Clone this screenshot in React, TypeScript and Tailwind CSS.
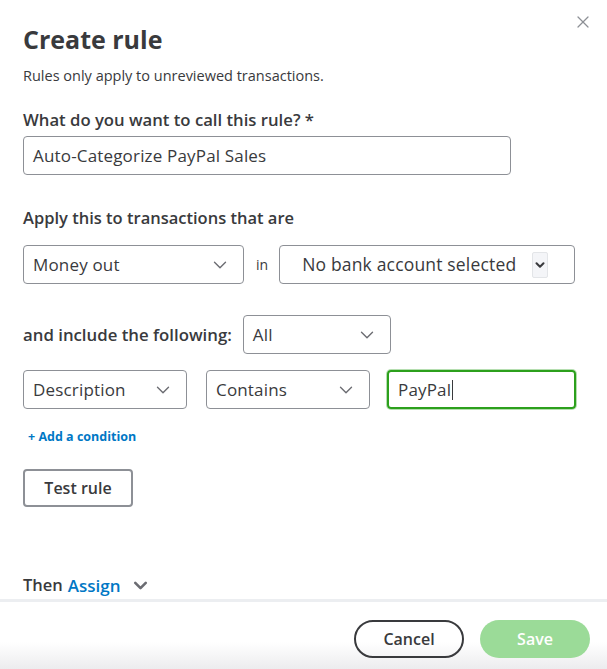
import { ChevronDown, X } from "lucide-react";

function Select({ label, width }: { label: string; width: string }) {
  return (
    <div
      className={`flex h-[39px] items-center justify-between rounded-[4px] border border-[#8d9096] bg-white pl-[9px] pr-[12px] ${width}`}
    >
      <span className="text-[17px] tracking-[0.01em] text-[#393a3d]">{label}</span>
      <ChevronDown size={22} strokeWidth={1.5} className="text-[#6b6c72]" />
    </div>
  );
}

export default function App() {
  return (
    <div className="relative flex h-[669px] w-[607px] flex-col bg-white font-['Open_Sans',sans-serif] text-[#393a3d]">
      <button className="absolute right-[14px] top-[12px] text-[#8d9096]">
        <X size={20} strokeWidth={1.5} />
      </button>

      <div className="flex-1 px-[23px] pt-[21px]">
        <h1 className="text-[25px] font-bold leading-[36px]">Create rule</h1>
        <p className="mt-[10px] text-[14.5px] leading-[18px]">Rules only apply to unreviewed transactions.</p>

        <label className="mt-[24px] block text-[16.7px] font-semibold leading-[22px]">
          What do you want to call this rule? *
        </label>
        <div className="mt-[5px] flex h-[39px] w-[488px] items-center rounded-[4px] border border-[#8d9096] px-[9px] text-[17px] tracking-[0.01em]">
          Auto-Categorize PayPal Sales
        </div>

        <div className="mt-[32px] text-[16.5px] font-semibold leading-[22px]">Apply this to transactions that are</div>
        <div className="mt-[16px] flex items-center">
          <Select label="Money out" width="w-[221px]" />
          <span className="ml-[12px] mr-[11px] text-[14px]">in</span>
          <div className="flex h-[39px] w-[296px] items-center justify-between rounded-[4px] border border-[#8d9096] pl-[22px] pr-[26px]">
            <span className="text-[17.5px] tracking-[0.01em]">No bank account selected</span>
            <span className="flex h-[26px] w-[16px] items-center justify-center rounded-[2px] border border-[#e3e5e8] bg-[#f4f5f8]">
              <ChevronDown size={14} strokeWidth={3.5} className="text-[#393a3d]" />
            </span>
          </div>
        </div>

        <div className="mt-[31px] flex items-center">
          <span className="text-[16.8px] font-semibold">and include the following:</span>
          <div className="ml-[11px]">
            <Select label="All" width="w-[148px]" />
          </div>
        </div>

        <div className="mt-[16px] flex items-center">
          <Select label="Description" width="w-[164px]" />
          <div className="ml-[19px]">
            <Select label="Contains" width="w-[164px]" />
          </div>
          <div className="ml-[17px] flex h-[39px] w-[189px] items-center rounded-[4px] border-2 border-[#2ca01c] px-[9px] text-[17px] tracking-[0.01em] shadow-[0_0_0_1px_rgba(44,160,28,0.35)]">
            PayPal<span className="ml-[1px] inline-block h-[20px] w-[1px] bg-[#393a3d]" />
          </div>
        </div>

        <button className="mt-[19px] ml-[5px] text-[12.5px] font-bold text-[#0077c5]">+ Add a condition</button>

        <div className="mt-[22px]">
          <button className="h-[38px] w-[110px] rounded-[4px] border-2 border-[#8d9096] text-[16px] font-semibold">
            Test rule
          </button>
        </div>

        <div className="mt-[66px] flex items-center gap-[5px] text-[16.5px]">
          <span className="font-semibold">Then</span>
          <span className="font-semibold text-[#0077c5] text-[17px]">Assign</span>
          <ChevronDown size={21} strokeWidth={3} className="ml-[4px] text-[#6b6c72]" />
        </div>
      </div>

      <div className="h-[4px] bg-[#eceef1]" />
      <div className="flex h-[68px] items-start justify-end gap-[16px] bg-gradient-to-b from-white from-60% to-[#ececee] pr-[17px] pt-[18px]">
        <button className="h-[38px] w-[110px] rounded-full border-2 border-[#393a3d] text-[16px] font-semibold">
          Cancel
        </button>
        <button className="h-[38px] w-[110px] rounded-full bg-[#9bdb98] text-[16px] font-semibold text-white">
          Save
        </button>
      </div>
    </div>
  );
}
